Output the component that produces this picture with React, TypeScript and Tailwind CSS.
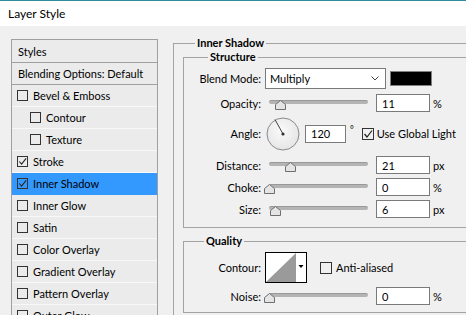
import React from "react";

const styles = [
  { label: "Bevel & Emboss", indent: false, checked: false },
  { label: "Contour", indent: true, checked: false },
  { label: "Texture", indent: true, checked: false },
  { label: "Stroke", indent: false, checked: true },
  { label: "Inner Shadow", indent: false, checked: true, active: true },
  { label: "Inner Glow", indent: false, checked: false },
  { label: "Satin", indent: false, checked: false },
  { label: "Color Overlay", indent: false, checked: false },
  { label: "Gradient Overlay", indent: false, checked: false },
  { label: "Pattern Overlay", indent: false, checked: false },
  { label: "Outer Glow", indent: false, checked: false },
];

function Check({ checked, size = 11 }: { checked: boolean; size?: number }) {
  return (
    <span
      className="shrink-0 border border-[#333] flex items-center justify-center"
      style={{ width: size, height: size }}
    >
      {checked && (
        <svg width={size - 2} height={size - 2} viewBox="0 0 10 10">
          <path d="M1.5 5 L4 8 L9 1.5" fill="none" stroke="#222" strokeWidth="1.2" />
        </svg>
      )}
    </span>
  );
}

function Thumb({ left }: { left: number }) {
  return (
    <svg
      className="absolute top-[6px]"
      style={{ left }}
      width="11"
      height="10"
      viewBox="0 0 11 10"
    >
      <path d="M5.5 0.5 L10.5 4.5 L10.5 9.5 L0.5 9.5 L0.5 4.5 Z" fill="#e4e4e4" stroke="#6e6e6e" />
    </svg>
  );
}

function NumBox({ value, width = 54 }: { value: string; width?: number }) {
  return (
    <div
      className="h-[18px] border border-[#7a7a7a] bg-white flex items-center pl-[5px]"
      style={{ width }}
    >
      {value}
    </div>
  );
}

function SliderRow({
  label,
  thumb,
  value,
  unit,
  className = "",
}: {
  label: string;
  thumb: number;
  value: string;
  unit: string;
  className?: string;
}) {
  return (
    <div className={"flex items-center h-[18px] " + className}>
      <span className="w-[77px] text-right">{label}</span>
      <div className="relative ml-[8px] w-[99px] h-[18px]">
        <div className="absolute top-[6px] left-0 w-[99px] h-[4px] rounded-full bg-[#b4b4b4] border-t border-[#999]" />
        <Thumb left={thumb} />
      </div>
      <div className="ml-[8px]">
        <NumBox value={value} />
      </div>
      <span className="ml-[3px]">{unit}</span>
    </div>
  );
}

export default function App() {
  return (
    <div className="w-[466px] h-[315px] overflow-hidden bg-[#f0f0f0] text-black text-[11px] leading-none font-['Lato',sans-serif]">
      <div className="h-[26px] border-t border-[#2f8d99] bg-white flex items-center pl-[8px] text-[12px]">
        Layer Style
      </div>

      <div className="flex pt-[13px] pl-[11px]">
        {/* styles list */}
        <div className="w-[147px] shrink-0 border border-[#a0a0a0] bg-[#ebebeb]">
          <div className="h-[23px] flex items-center pl-[6px] border-b border-[#a0a0a0]">Styles</div>
          <div className="h-[22px] flex items-center pl-[6px] border-b border-[#a0a0a0]">
            Blending Options: Default
          </div>
          {styles.map((s) => (
            <div
              key={s.label}
              className={
                "h-[22px] flex items-center border-b " +
                (s.active ? "bg-[#3399ff] border-[#3399ff]" : "border-[#f8f8f8]") +
                (s.indent ? " pl-[18px]" : " pl-[5px]")
              }
            >
              <Check checked={s.checked} />
              <span className="ml-[5px]">{s.label}</span>
            </div>
          ))}
        </div>

        {/* settings */}
        <fieldset className="ml-[15px] mt-[-3px] w-[310px] shrink-0 border border-[#a3a3a3] pl-[9px] pr-[10px]">
          <legend className="ml-[12px] px-[2px] font-bold leading-[14px]">Inner Shadow</legend>

          <fieldset className="border border-[#a3a3a3] pb-[9px]">
            <legend className="ml-[24px] px-[2px] font-bold leading-[14px]">Structure</legend>

            <div className="flex items-center h-[21px] mt-[4px]">
              <span className="w-[77px] text-right">Blend Mode:</span>
              <div className="ml-[4px] w-[121px] h-[21px] border border-[#7a7a7a] bg-white flex items-center justify-between pl-[4px] pr-[6px]">
                <span>Multiply</span>
                <svg width="8" height="5" viewBox="0 0 8 5">
                  <path d="M0.5 0.5 L4 4 L7.5 0.5" fill="none" stroke="#444" />
                </svg>
              </div>
              <div className="ml-[4px] w-[42px] h-[15px] border border-[#808080] bg-black" />
            </div>

            <SliderRow label="Opacity:" thumb={6} value="11" unit="%" className="mt-[5px]" />

            <div className="flex items-center h-[33px] mt-[5px]">
              <span className="w-[77px] text-right">Angle:</span>
              <svg className="ml-[5px]" width="34" height="34" viewBox="0 0 34 34">
                <defs>
                  <radialGradient id="dial" cx="0.45" cy="0.4" r="0.7">
                    <stop offset="0" stopColor="#fafafa" />
                    <stop offset="1" stopColor="#e2e2e2" />
                  </radialGradient>
                </defs>
                <circle cx="17" cy="17" r="16" fill="url(#dial)" stroke="#8a8a8a" />
                <line x1="17" y1="17" x2="9" y2="2.5" stroke="#444" strokeWidth="1" />
                <circle cx="17" cy="17" r="1.6" fill="#333" />
              </svg>
              <div className="ml-[5px]">
                <NumBox value="120" width={41} />
              </div>
              <span className="ml-[4px] self-start mt-[8px] text-[9px]">°</span>
              <div className="ml-[8px] flex items-center">
                <Check checked size={12} />
                <span className="ml-[3px]">Use Global Light</span>
              </div>
            </div>

            <SliderRow label="Distance:" thumb={16} value="21" unit="px" className="mt-[6px]" />
            <SliderRow label="Choke:" thumb={-5} value="0" unit="%" className="mt-[4px]" />
            <SliderRow label="Size:" thumb={1} value="6" unit="px" className="mt-[4px]" />
          </fieldset>

          <fieldset className="mt-[6px] border border-[#a3a3a3] pb-[7px]">
            <legend className="ml-[20px] px-[2px] font-bold leading-[14px]">Quality</legend>

            <div className="flex items-center h-[31px] mt-[4px]">
              <span className="w-[77px] text-right">Contour:</span>
              <svg className="ml-[4px]" width="42" height="31" viewBox="0 0 42 31">
                <rect x="0.5" y="0.5" width="41" height="30" fill="#fff" stroke="#000" />
                <path d="M1 30 L31 1 L31 30 Z" fill="#9a9a9a" />
                <path d="M33.5 13 L38.5 13 L36 16 Z" fill="#000" />
              </svg>
              <div className="ml-[13px] flex items-center">
                <Check checked={false} size={12} />
                <span className="ml-[4px]">Anti-aliased</span>
              </div>
            </div>

            <SliderRow label="Noise:" thumb={-5} value="0" unit="%" className="mt-[4px]" />
          </fieldset>
          <div className="h-[20px]" />
        </fieldset>
      </div>
    </div>
  );
}
